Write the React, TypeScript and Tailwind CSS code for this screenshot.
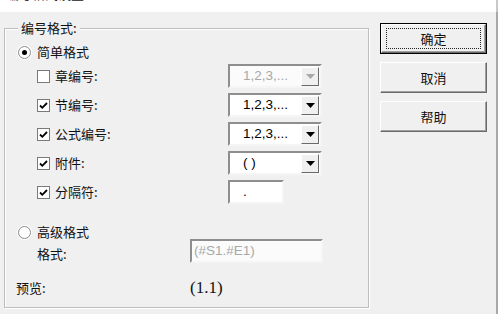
import React from 'react';

const cjk = { fontFamily: '"Noto Sans CJK SC", "Noto Sans", sans-serif' };
const latin = { fontFamily: '"Liberation Sans", Arial, sans-serif' };

function Radio(props: { checked?: boolean }) {
    return (
        <span className="flex h-[13px] w-[13px] shrink-0 items-center justify-center rounded-full border border-[#8a8a8a] bg-white shadow-[0_0_0_1px_#fff]">
            {props.checked && <span className="h-[5px] w-[5px] rounded-full bg-black" />}
        </span>
    );
}

function Check(props: { checked?: boolean }) {
    return (
        <span className="flex h-[13px] w-[13px] shrink-0 items-center justify-center border border-[#7a7a7a] bg-white">
            {props.checked && (
                <svg width="9" height="9" viewBox="0 0 9 9">
                    <path d="M1 4.5 L3.3 6.8 L8 2" fill="none" stroke="#000" strokeWidth="1.8" />
                </svg>
            )}
        </span>
    );
}

function Combo(props: { value: string; disabled?: boolean }) {
    const { value, disabled } = props;
    return (
        <div
            className={`flex h-[24px] w-[94px] items-center border-2 border-t-[#8e8e8e] border-l-[#8e8e8e] border-r-[#f5f5f5] border-b-[#f5f5f5] ${disabled ? 'bg-[#fbfbfb]' : 'bg-white'}`}
        >
            <span
                className={`flex-1 pl-[13px] text-[13.5px] leading-none ${disabled ? 'text-[#a8a8a8]' : 'text-black'}`}
                style={latin}
            >
                {value}
            </span>
            <span className="mr-[1px] flex h-[19px] w-[18px] items-center justify-center border border-t-[#fff] border-l-[#fff] border-r-[#6a6a6a] border-b-[#6a6a6a] bg-[#f0f0f0]">
                <svg width="9" height="5" viewBox="0 0 9 5">
                    <path d="M0 0 H9 L4.5 5 Z" fill={disabled ? '#a8a8a8' : '#000'} />
                </svg>
            </span>
        </div>
    );
}

function CheckRow(props: { label: string; checked?: boolean; children: React.ReactNode }) {
    return (
        <div className="flex h-[24px] items-center">
            <div className="flex w-[223px] items-center pl-[32px]">
                <Check checked={props.checked} />
                <span className="ml-[5px] text-[13px] text-[#111]" style={cjk}>
                    {props.label}
                </span>
            </div>
            {props.children}
        </div>
    );
}

function Button(props: { label: string; primary?: boolean }) {
    return (
        <div
            className={`flex h-[31px] w-[107px] items-center justify-center ${props.primary ? 'border border-black' : ''}`}
        >
            <div className="flex h-full w-full items-center justify-center border border-t-white border-l-white border-r-[#6a6a6a] border-b-[#6a6a6a] bg-[#f0f0f0] shadow-[inset_-1px_-1px_0_#a0a0a0]">
                <div
                    className={`flex h-[calc(100%-6px)] w-[calc(100%-8px)] items-center justify-center ${props.primary ? 'border border-dotted border-[#222]' : ''}`}
                >
                    <span className="text-[13px] text-[#111]" style={cjk}>
                        {props.label}
                    </span>
                </div>
            </div>
        </div>
    );
}

export default function App() {
    return (
        <div className="h-[314px] w-[498px] overflow-hidden bg-[#f0f0f0]">
            <div className="h-[12px] overflow-hidden border-r-2 border-[#c8c8c8] bg-white">
                <div className="-mt-[15px] pl-[6px] text-[13px] leading-[18px] text-[#222]" style={cjk}>
                    编号格式设置
                </div>
            </div>
            <div className="flex h-[302px] border-r-2 border-[#a8a8a8]">
                <div className="relative ml-[4px] mt-[16px] h-[280px] w-[365px] border border-[#bdbdbd] shadow-[1px_1px_0_#fff,inset_1px_1px_0_#fff]">
                    <span
                        className="absolute -top-[9px] left-[13px] bg-[#f0f0f0] px-[3px] text-[13px] leading-[16px] text-[#111]"
                        style={cjk}
                    >
                        编号格式:
                    </span>
                    <div className="flex flex-col pt-[14px]">
                        <div className="flex h-[18px] items-center pl-[13px]">
                            <Radio checked />
                            <span className="ml-[6px] text-[13px] text-[#111]" style={cjk}>
                                简单格式
                            </span>
                        </div>
                        <div className="mt-[3px] flex flex-col gap-[5px]">
                            <CheckRow label="章编号:">
                                <Combo value="1,2,3,..." disabled />
                            </CheckRow>
                            <CheckRow label="节编号:" checked>
                                <Combo value="1,2,3,..." />
                            </CheckRow>
                            <CheckRow label="公式编号:" checked>
                                <Combo value="1,2,3,..." />
                            </CheckRow>
                            <CheckRow label="附件:" checked>
                                <Combo value="( )" />
                            </CheckRow>
                            <CheckRow label="分隔符:" checked>
                                <div className="flex h-[24px] w-[56px] items-center border-2 border-t-[#8e8e8e] border-l-[#8e8e8e] border-r-[#f5f5f5] border-b-[#f5f5f5] bg-white">
                                    <span className="pl-[13px] text-[13.5px]" style={latin}>
                                        .
                                    </span>
                                </div>
                            </CheckRow>
                        </div>
                        <div className="mt-[21px] flex h-[14px] items-center pl-[13px]">
                            <Radio />
                            <span className="ml-[6px] text-[13px] text-[#111]" style={cjk}>
                                高级格式
                            </span>
                        </div>
                        <div className="flex h-[24px] items-center">
                            <span className="w-[185px] pl-[32px] pt-[6px] text-[13px] text-[#111]" style={cjk}>
                                格式:
                            </span>
                            <div className="flex h-[24px] w-[133px] items-center border-2 border-t-[#8e8e8e] border-l-[#8e8e8e] border-r-[#f5f5f5] border-b-[#f5f5f5] bg-[#fbfbfb]">
                                <span className="pl-[2px] text-[13.5px] text-[#a8a8a8]" style={latin}>
                                    (#S1.#E1)
                                </span>
                            </div>
                        </div>
                        <div className="mt-[16px] flex h-[18px] items-center">
                            <span className="w-[185px] pl-[11px] text-[13px] text-[#111]" style={cjk}>
                                预览:
                            </span>
                            <span
                                className="text-[17px] text-[#111]"
                                style={{ fontFamily: '"Liberation Serif", "Times New Roman", serif' }}
                            >
                                (1.1)
                            </span>
                        </div>
                    </div>
                </div>
                <div className="ml-[11px] mt-[11px] flex flex-col gap-[8px]">
                    <Button label="确定" primary />
                    <Button label="取消" />
                    <Button label="帮助" />
                </div>
            </div>
        </div>
    );
}
